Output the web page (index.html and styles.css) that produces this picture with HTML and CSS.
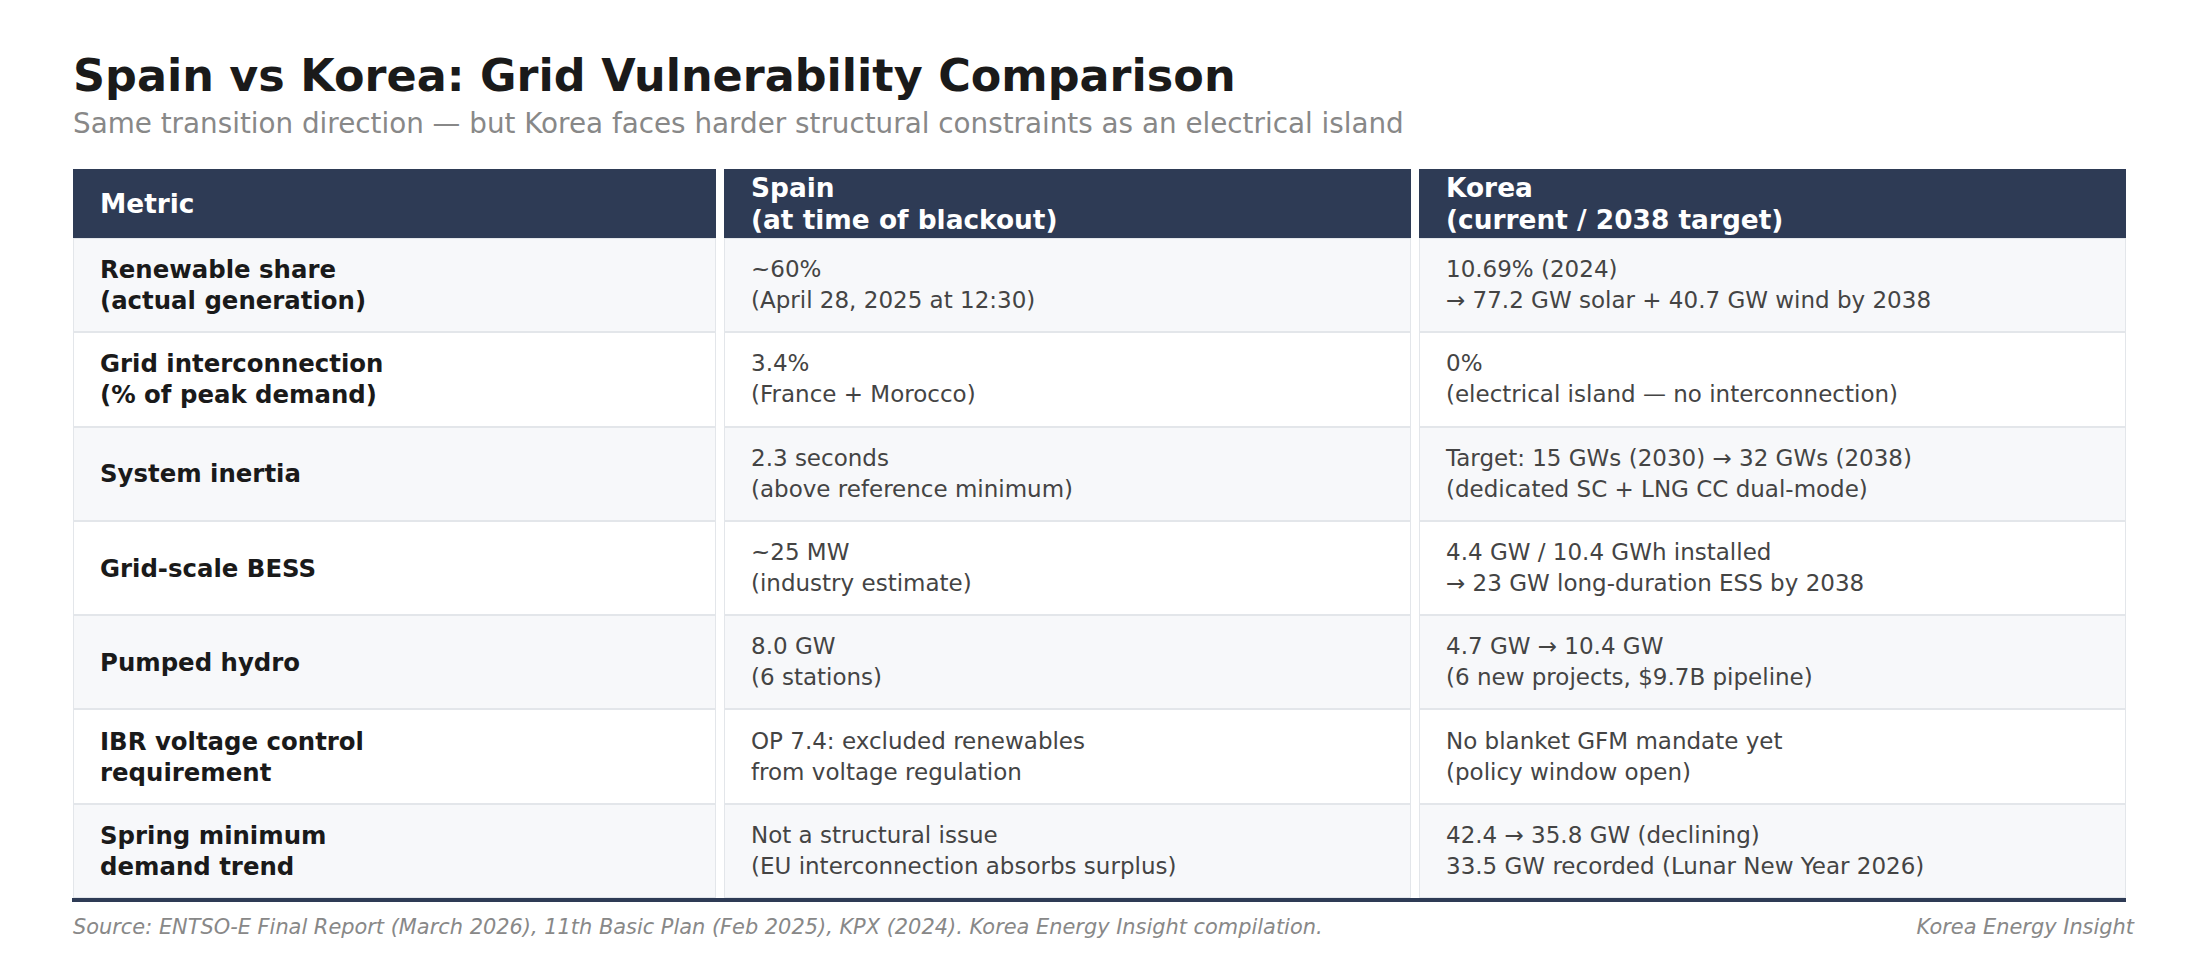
FILE: index.html
```html
<!DOCTYPE html>
<html lang="en">
<head>
<meta charset="utf-8">
<title>Spain vs Korea: Grid Vulnerability Comparison</title>
<link rel="stylesheet" href="styles.css">
</head>
<body>
<div class="page">
  <h1 class="title">Spain vs Korea: Grid Vulnerability Comparison</h1>
  <p class="subtitle">Same transition direction — but Korea faces harder structural constraints as an electrical island</p>

  <div class="table">
    <div class="th">Metric</div>
    <div class="th">Spain<br>(at time of blackout)</div>
    <div class="th">Korea<br>(current / 2038 target)</div>

    <div class="td metric alt">Renewable share<br>(actual generation)</div>
    <div class="td alt">~60%<br>(April 28, 2025 at 12:30)</div>
    <div class="td alt">10.69% (2024)<br>→ 77.2 GW solar + 40.7 GW wind by 2038</div>

    <div class="td metric">Grid interconnection<br>(% of peak demand)</div>
    <div class="td">3.4%<br>(France + Morocco)</div>
    <div class="td">0%<br>(electrical island — no interconnection)</div>

    <div class="td metric alt">System inertia</div>
    <div class="td alt">2.3 seconds<br>(above reference minimum)</div>
    <div class="td alt">Target: 15 GWs (2030) → 32 GWs (2038)<br>(dedicated SC + LNG CC dual-mode)</div>

    <div class="td metric">Grid-scale BESS</div>
    <div class="td">~25 MW<br>(industry estimate)</div>
    <div class="td">4.4 GW / 10.4 GWh installed<br>→ 23 GW long-duration ESS by 2038</div>

    <div class="td metric alt">Pumped hydro</div>
    <div class="td alt">8.0 GW<br>(6 stations)</div>
    <div class="td alt">4.7 GW → 10.4 GW<br>(6 new projects, $9.7B pipeline)</div>

    <div class="td metric">IBR voltage control<br>requirement</div>
    <div class="td">OP 7.4: excluded renewables<br>from voltage regulation</div>
    <div class="td">No blanket GFM mandate yet<br>(policy window open)</div>

    <div class="td metric alt">Spring minimum<br>demand trend</div>
    <div class="td alt">Not a structural issue<br>(EU interconnection absorbs surplus)</div>
    <div class="td alt">42.4 → 35.8 GW (declining)<br>33.5 GW recorded (Lunar New Year 2026)</div>
  </div>
  <div class="table-rule"></div>

  <div class="footer">
    <span>Source: ENTSO-E Final Report (March 2026), 11th Basic Plan (Feb 2025), KPX (2024). Korea Energy Insight compilation.</span>
    <span>Korea Energy Insight</span>
  </div>
</div>
</body>
</html>
```

FILE: styles.css
```css
* { box-sizing: border-box; }
html, body {
  margin: 0;
  padding: 0;
  background: #ffffff;
}
body {
  font-family: "DejaVu Sans", "Noto Sans", sans-serif;
  width: 2210px;
  height: 960px;
  overflow: hidden;
}
.page {
  padding: 50px 0 0 73px;
}
.title {
  margin: 0;
  font-size: 44.5px;
  line-height: 52px;
  font-weight: bold;
  color: #1a1a1a;
}
.subtitle {
  margin: 6px 0 0 0;
  font-size: 27.8px;
  line-height: 32px;
  color: #888888;
}
.table {
  margin-top: 29px;
  width: 2053px;
  display: grid;
  grid-template-columns: 643px 687px 707px;
  grid-template-rows: 69px repeat(7, 94.3px);
  column-gap: 8px;
}
.th {
  background: #2e3b55;
  color: #ffffff;
  font-weight: bold;
  font-size: 26.4px;
  line-height: 32px;
  padding: 0 27px;
  display: flex;
  flex-direction: column;
  justify-content: center;
}
.td {
  background: #ffffff;
  border: 1px solid #e3e6ea;
  color: #444444;
  font-size: 23px;
  line-height: 31px;
  padding: 0 26px;
  display: flex;
  flex-direction: column;
  justify-content: center;
}
.td.alt {
  background: #f7f8fa;
}
.td.metric {
  color: #1a1a1a;
  font-weight: bold;
  font-size: 24.4px;
}
.table-rule {
  width: 2054px;
  margin-left: -1px;
  height: 4px;
  background: #2e3b55;
}
.footer {
  margin-top: 13px;
  width: 2061px;
  display: flex;
  justify-content: space-between;
  font-size: 20.9px;
  line-height: 24px;
  font-style: italic;
  color: #888888;
}
```
